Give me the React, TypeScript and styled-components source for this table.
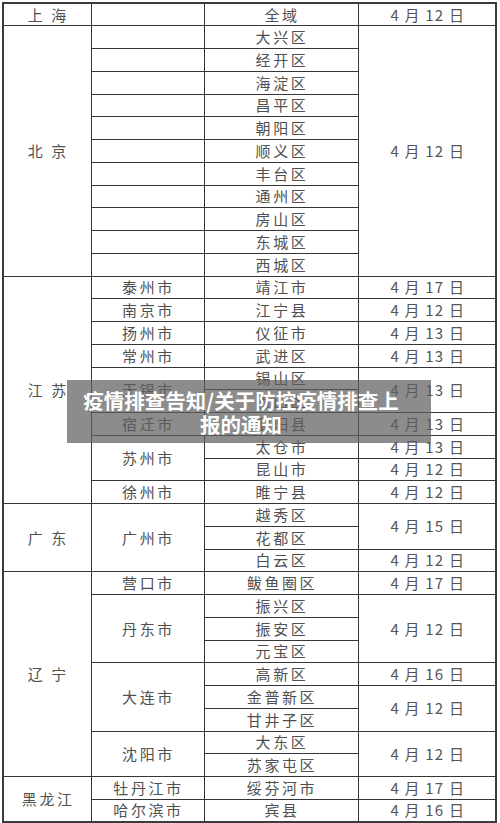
import React from 'react';
import styled, { createGlobalStyle } from 'styled-components';

const GlobalStyle = createGlobalStyle`
  html, body {
    margin: 0;
    padding: 0;
    background: #ffffff;
  }
  body {
    font-family: "Noto Sans CJK SC", "Noto Sans", sans-serif;
  }
`;

type Cell = { text?: string; span?: number; kind: 'prov' | 'city' | 'area' | 'date' };

// 一行里只放本行新开始的单元格
const p = (text: string, span = 1): Cell => ({ text, span, kind: 'prov' });
const c = (text: string, span = 1): Cell => ({ text, span, kind: 'city' });
const a = (text: string, span = 1): Cell => ({ text, span, kind: 'area' });
const d = (text: string, span = 1): Cell => ({ text, span, kind: 'date' });

const rows: Cell[][] = [
  [p('上 海'), c(''), a('全域'), d('4 月 12 日')],
  [p('北 京', 11), c(''), a('大兴区'), d('4 月 12 日', 11)],
  [c(''), a('经开区')],
  [c(''), a('海淀区')],
  [c(''), a('昌平区')],
  [c(''), a('朝阳区')],
  [c(''), a('顺义区')],
  [c(''), a('丰台区')],
  [c(''), a('通州区')],
  [c(''), a('房山区')],
  [c(''), a('东城区')],
  [c(''), a('西城区')],
  [p('江 苏', 10), c('泰州市'), a('靖江市'), d('4 月 17 日')],
  [c('南京市'), a('江宁县'), d('4 月 12 日')],
  [c('扬州市'), a('仪征市'), d('4 月 13 日')],
  [c('常州市'), a('武进区'), d('4 月 13 日')],
  [c('无锡市', 2), a('锡山区'), d('4 月 13 日', 2)],
  [a('惠山区')],
  [c('宿迁市'), a('泗阳县'), d('4 月 13 日')],
  [c('苏州市', 2), a('太仓市'), d('4 月 13 日')],
  [a('昆山市'), d('4 月 12 日')],
  [c('徐州市'), a('睢宁县'), d('4 月 12 日')],
  [p('广 东', 3), c('广州市', 3), a('越秀区'), d('4 月 15 日', 2)],
  [a('花都区')],
  [a('白云区'), d('4 月 12 日')],
  [p('辽 宁', 9), c('营口市'), a('鲅鱼圈区'), d('4 月 17 日')],
  [c('丹东市', 3), a('振兴区'), d('4 月 12 日', 3)],
  [a('振安区')],
  [a('元宝区')],
  [c('大连市', 3), a('高新区'), d('4 月 16 日')],
  [a('金普新区'), d('4 月 12 日', 2)],
  [a('甘井子区')],
  [c('沈阳市', 2), a('大东区'), d('4 月 12 日', 2)],
  [a('苏家屯区')],
  [p('黑龙江', 2), c('牡丹江市'), a('绥芬河市'), d('4 月 17 日')],
  [c('哈尔滨市'), a('宾县'), d('4 月 16 日')],
];

export default function App() {
  return (
    <>
      <GlobalStyle />
      <Page>
        <Sheet>
          <colgroup>
            <col style={{ width: 88 }} />
            <col style={{ width: 113 }} />
            <col style={{ width: 154 }} />
            <col />
          </colgroup>
          <tbody>
            {rows.map((row, i) => (
              <Row key={i}>
                {row.map((cell, j) => (
                  <Td key={j} rowSpan={cell.span} $kind={cell.kind}>
                    {cell.text}
                  </Td>
                ))}
              </Row>
            ))}
          </tbody>
        </Sheet>
        <Banner>
          <BannerText>疫情排查告知/关于防控疫情排查上报的通知</BannerText>
        </Banner>
      </Page>
    </>
  );
}

const Page = styled.div`
  position: relative;
  width: 500px;
  height: 823px;
  padding: 2px 2px 0 2px;
  box-sizing: border-box;
  overflow: hidden;
  background: #fff;
`;

const Sheet = styled.table`
  width: 495px;
  border-collapse: collapse;
  table-layout: fixed;
  border: 2px solid #3c3c3c;
`;

const Row = styled.tr`
  height: 22.75px;
`;

const Td = styled.td<{ $kind: Cell['kind'] }>`
  border: 1.4px solid #353535;
  padding: 0;
  text-align: center;
  vertical-align: middle;
  font-size: 15px;
  line-height: 18px;
  font-weight: 400;
  color: ${(props) => (props.$kind === 'date' ? '#555555' : '#505050')};
  letter-spacing: ${(props) => (props.$kind === 'date' ? '1.2px' : '2.6px')};
  white-space: pre;
  overflow: hidden;
  padding-left: ${(props) => (props.$kind === 'prov' ? '2px' : '2px')};
`;

const Banner = styled.div`
  position: absolute;
  left: 67px;
  top: 380px;
  width: 364px;
  height: 63px;
  background: rgba(95, 95, 95, 0.72);
  display: flex;
  align-items: center;
  justify-content: center;
  padding: 0 10px;
  box-sizing: border-box;
`;

const BannerText = styled.div`
  color: #ffffff;
  font-family: "Noto Sans CJK SC", "Noto Sans", sans-serif;
  font-weight: 700;
  font-size: 20.5px;
  line-height: 24px;
  text-align: center;
  margin-right: 16px;
`;
